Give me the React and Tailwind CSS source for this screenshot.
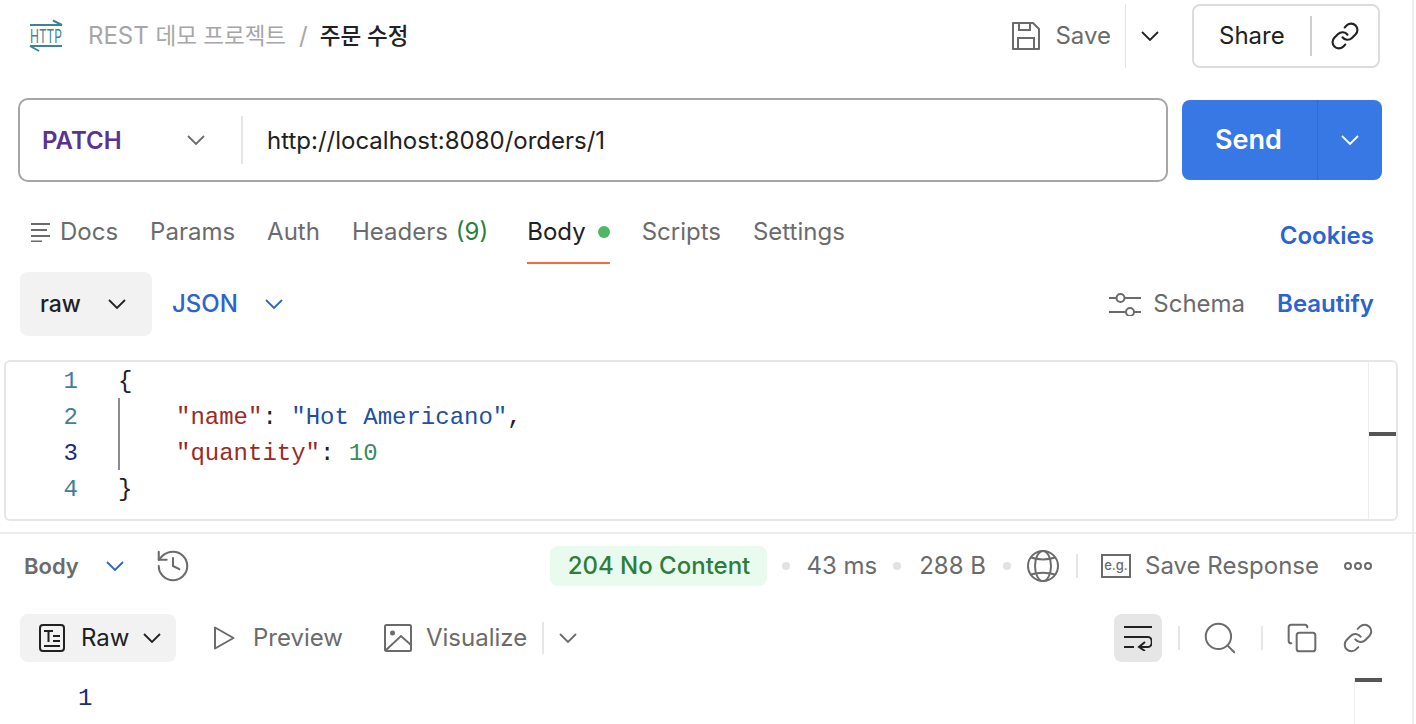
import React from "react";
import { Link, Search, Copy, History } from "lucide-react";

const SANS = "font-['Inter','Noto_Sans_CJK_KR',sans-serif]";

function Chevron({ className = "" }) {
  return (
    <svg width="22" height="22" viewBox="0 0 22 22" fill="none" stroke="currentColor" strokeWidth="1.8" className={`shrink-0 ${className}`}>
      <path d="M3 7l8 8 8-8" />
    </svg>
  );
}

function HttpLogo() {
  return (
    <svg width="36" height="34" viewBox="0 0 36 34" className="shrink-0 overflow-visible">
      <path d="M2 6H34M25 1.500L34 6M2 27H34M2 27L11 32" fill="none" stroke="#3c8494" strokeWidth="2" />
      <text x="2" y="24" textLength="32" lengthAdjust="spacingAndGlyphs" fontFamily="Inter" fontSize="18" fill="#3c8494">
        HTTP
      </text>
    </svg>
  );
}

function SaveIcon() {
  return (
    <svg width="30" height="30" viewBox="0 0 30 30" fill="none" stroke="#6b6b6b" strokeWidth="2">
      <path d="M2 2H22L28 8V28H2Z" strokeLinejoin="round" />
      <path d="M8 2V9H19V2M7 28V17H23V28" />
    </svg>
  );
}

function DocsIcon() {
  return (
    <svg width="20" height="20" viewBox="0 0 20 20" stroke="#6b6b6b" strokeWidth="2">
      <path d="M1 2H20M1 8H17M1 14H20M1 19.500H12" />
    </svg>
  );
}

function SlidersIcon() {
  return (
    <svg width="32" height="24" viewBox="0 0 32 24" fill="none" stroke="#6b6b6b" strokeWidth="2">
      <path d="M0 6H7M16 6H32M0 20H16M25 20H32" />
      <circle cx="11.500" cy="6" r="4" />
      <circle cx="21" cy="20" r="4" />
    </svg>
  );
}

function GlobeIcon() {
  return (
    <svg width="32" height="32" viewBox="0 0 32 32" fill="none" stroke="#6b6b6b" strokeWidth="2" className="shrink-0">
      <circle cx="16" cy="16" r="15" />
      <ellipse cx="16" cy="16" rx="8" ry="15" />
      <path d="M4 7.500C11 10 21 10 28 7.500M4 24.500C11 22 21 22 28 24.500" />
    </svg>
  );
}

function RawIcon() {
  return (
    <svg width="28" height="28" viewBox="0 0 28 28" fill="none" stroke="#212121" strokeWidth="2" className="shrink-0">
      <rect x="2" y="1" width="24" height="26" rx="3" />
      <path d="M6 7H15M10.500 7V18M15 12H22M15 17H22M6 22H22" />
    </svg>
  );
}

function WrapIcon() {
  return (
    <svg width="28" height="26" viewBox="0 0 28 26" fill="none" stroke="#212121" strokeWidth="2">
      <path d="M0 2H28M0 12H24C29 12 29 22 24 22H16M21 17l-6 5 6 4M0 22H10" />
    </svg>
  );
}

function PlayIcon() {
  return (
    <svg width="21" height="24" viewBox="0 0 21 24" fill="none" stroke="#6b6b6b" strokeWidth="2" className="shrink-0">
      <path d="M1 1.500V22.500L19.500 12Z" strokeLinejoin="round" />
    </svg>
  );
}

function ImageIcon() {
  return (
    <svg width="28" height="28" viewBox="0 0 28 28" fill="none" stroke="#6b6b6b" strokeWidth="2" className="shrink-0">
      <rect x="1" y="1" width="26" height="26" rx="1.500" />
      <circle cx="8.500" cy="9" r="2.500" fill="#6b6b6b" stroke="none" />
      <path d="M2 26L17 12L27 21" />
    </svg>
  );
}

function Dot() {
  return <span className="block w-2 h-2 rounded-full bg-[#e2e2e2] shrink-0" />;
}

function RequestTab({ active, children }) {
  return (
    <div className={`h-[64px] pt-[16px] flex items-start border-b-2 ${active ? "border-[#f26b3a] text-[#212121]" : "border-transparent text-[#6b6b6b]"}`}>
      {children}
    </div>
  );
}

export default function App() {
  return (
    <div className={`${SANS} relative w-[1416px] h-[724px] overflow-hidden bg-white text-[24px] leading-[32px]`}>
      <div className="absolute top-0 bottom-0 left-[1412px] w-[2px] bg-[#ececec]" />

      {/* header */}
      <div className="h-[72px] pl-[28px] pr-[36px] flex items-center justify-between">
        <div className="flex items-center">
          <HttpLogo />
          <span className="ml-[24px] text-[#a6a6a6]">
            REST <span className="text-[22.5px]">데모 프로젝트</span>
          </span>
          <span className="ml-[13px] text-[#a6a6a6]">/</span>
          <span className="ml-[12px] text-[22.5px] font-medium text-[#212121]">주문 수정</span>
        </div>
        <div className="flex items-center">
          <SaveIcon />
          <span className="ml-[14px] text-[#6b6b6b]">Save</span>
          <span className="ml-[14px] w-[1px] h-[64px] bg-[#e6e6e6]" />
          <Chevron className="ml-[13px] text-[#212121]" />
          <div className="ml-[31px] w-[188px] h-[64px] rounded-lg border-2 border-[#dcdcdc] flex items-center">
            <span className="ml-[25px] text-[#212121]">Share</span>
            <span className="ml-[25px] w-[2px] h-[40px] bg-[#cfcfcf]" />
            <Link size={30} strokeWidth={1.7} className="ml-[18px] text-[#212121]" />
          </div>
        </div>
      </div>

      {/* url bar */}
      <div className="mt-[26px] pl-[18px] pr-[34px] flex items-center gap-[14px]">
        <div className="flex-1 h-[84px] rounded-[10px] border-2 border-[#a6a6a6] flex items-center">
          <span className="ml-[22px] pt-[2px] w-[143px] font-semibold text-[#5a3295]">PATCH</span>
          <Chevron className="text-[#6b6b6b]" />
          <span className="ml-[34px] w-[2px] h-[48px] bg-[#e6e6e6]" />
          <span className="ml-[24px] pt-[2px] text-[#212121]">http://localhost:8080/orders/1</span>
        </div>
        <div className="w-[200px] h-[80px] rounded-lg bg-[#3878e4] flex items-center text-white">
          <span className="w-[133px] text-center text-[27px] font-semibold">Send</span>
          <span className="ml-[2px] w-[1px] h-[80px] bg-[#2f6cd4]" />
          <Chevron className="ml-[21px]" />
        </div>
      </div>

      {/* request tabs */}
      <div className="mt-[18px] h-[64px] pl-[30px] pr-[42px] flex items-start justify-between">
        <div className="flex items-start">
          <RequestTab>
            <span className="mt-[6px] mr-[10px]"><DocsIcon /></span>
            <span>Docs</span>
          </RequestTab>
          <div className="ml-[32px]"><RequestTab>Params</RequestTab></div>
          <div className="ml-[32px]"><RequestTab>Auth</RequestTab></div>
          <div className="ml-[32px]">
            <RequestTab>
              Headers<span className="ml-[8px] text-[#2f7d3b]">(9)</span>
            </RequestTab>
          </div>
          <div className="ml-[39px]">
            <RequestTab active>
              Body<span className="ml-[12px] mt-[10px] w-[12px] h-[12px] rounded-full bg-[#4fb862]" />
            </RequestTab>
          </div>
          <div className="ml-[32px]"><RequestTab>Scripts</RequestTab></div>
          <div className="ml-[32px]"><RequestTab>Settings</RequestTab></div>
        </div>
        <span className="mt-[20px] font-semibold text-[#2b64cf]">Cookies</span>
      </div>

      {/* body options */}
      <div className="mt-[8px] h-[64px] pl-[20px] pr-[42px] flex items-center justify-between">
        <div className="flex items-center">
          <div className="w-[132px] h-[64px] rounded-lg bg-[#f2f2f2] flex items-center pl-[20px]">
            <span className="text-[23px] font-medium text-[#212121]">raw</span>
            <Chevron className="ml-[25px] text-[#212121]" />
          </div>
          <span className="ml-[20px] font-medium text-[#2b64cf]">JSON</span>
          <Chevron className="ml-[25px] text-[#2b64cf]" />
        </div>
        <div className="flex items-center">
          <SlidersIcon />
          <span className="ml-[12px] text-[#6b6b6b]">Schema</span>
          <span className="ml-[32px] font-semibold text-[#2b64cf]">Beautify</span>
        </div>
      </div>

      {/* editor */}
      <div className="relative mt-[24px] ml-[4px] w-[1394px] h-[161px] rounded-md border-2 border-[#e6e6e6] font-['Liberation_Mono',monospace] text-[24px]">
        <div className="flex">
          <div className="w-[72px] text-right text-[#3f7f99]">
            <div className="h-[36px] leading-[40px]">1</div>
            <div className="h-[36px] leading-[40px]">2</div>
            <div className="h-[36px] leading-[40px] text-[#1c2a80]">3</div>
            <div className="h-[36px] leading-[40px]">4</div>
          </div>
          <div className="ml-[40px] text-[#212121]">
            <div className="h-[36px] leading-[40px]">{"{"}</div>
            <div className="border-l-2 border-[#8c8c8c] pl-[56px]">
              <div className="h-[36px] leading-[40px]">
                <span className="text-[#9a2a26]">"name"</span>: <span className="text-[#1f4f9e]">"Hot Americano"</span>,
              </div>
              <div className="h-[36px] leading-[40px]">
                <span className="text-[#9a2a26]">"quantity"</span>: <span className="text-[#3b8a5e]">10</span>
              </div>
            </div>
            <div className="h-[36px] leading-[40px]">{"}"}</div>
          </div>
        </div>
        <div className="absolute top-0 bottom-0 right-0 w-[28px] border-l border-[#eeeeee]">
          <div className="absolute top-[70px] left-0 right-0 h-[4px] bg-[#555555]" />
        </div>
      </div>

      <div className="mt-[11px] h-[2px] bg-[#ececec]" />

      {/* response bar */}
      <div className="mt-[12px] h-[40px] pl-[24px] pr-[44px] flex items-center justify-between">
        <div className="flex items-center">
          <span className="font-semibold text-[22px] text-[#6b6b6b]">Body</span>
          <Chevron className="ml-[25px] text-[#2b64cf]" />
          <History size={38} strokeWidth={1.3} className="ml-[28px] text-[#6b6b6b]" />
        </div>
        <div className="flex items-center text-[#6b6b6b]">
          <span className="w-[217px] h-[40px] rounded-lg bg-[#e9fbef] text-center leading-[40px] font-medium text-[#2f7d3b]">204 No Content</span>
          <span className="ml-[15px]"><Dot /></span>
          <span className="ml-[16px]">43 ms</span>
          <span className="ml-[16px]"><Dot /></span>
          <span className="ml-[18px]">288 B</span>
          <span className="ml-[17px]"><Dot /></span>
          <span className="ml-[16px]"><GlobeIcon /></span>
          <span className="ml-[17px] w-[2px] h-[24px] bg-[#e6e6e6]" />
          <span className="ml-[23px] w-[30px] h-[24px] border-2 border-[#6b6b6b] text-[13px] leading-[18px] text-center font-medium">e.g.</span>
          <span className="ml-[14px]">Save Response</span>
          <span className="ml-[25px] flex gap-[2px]">
            <span className="w-[8px] h-[8px] rounded-full border-2 border-[#6b6b6b]" />
            <span className="w-[8px] h-[8px] rounded-full border-2 border-[#6b6b6b]" />
            <span className="w-[8px] h-[8px] rounded-full border-2 border-[#6b6b6b]" />
          </span>
        </div>
      </div>

      {/* response view row */}
      <div className="mt-[28px] h-[48px] pl-[20px] pr-[42px] flex items-center justify-between">
        <div className="flex items-center text-[#6b6b6b]">
          <div className="w-[156px] h-[48px] rounded-lg bg-[#f2f2f2] flex items-center pl-[18px] text-[#212121]">
            <RawIcon />
            <span className="ml-[15px]">Raw</span>
            <Chevron className="ml-[12px]" />
          </div>
          <span className="ml-[38px]"><PlayIcon /></span>
          <span className="ml-[18px]">Preview</span>
          <span className="ml-[41px]"><ImageIcon /></span>
          <span className="ml-[14px]">Visualize</span>
          <span className="ml-[15px] w-[2px] h-[32px] bg-[#e6e6e6]" />
          <Chevron className="ml-[13px]" />
        </div>
        <div className="flex items-center text-[#6b6b6b]">
          <div className="w-[48px] h-[48px] rounded-lg bg-[#e6e6e6] flex items-center justify-center">
            <WrapIcon />
          </div>
          <span className="ml-[16px] w-[2px] h-[24px] bg-[#e6e6e6]" />
          <Search size={38} strokeWidth={1.25} className="ml-[21px]" />
          <span className="ml-[22px] w-[2px] h-[24px] bg-[#e6e6e6]" />
          <Copy size={32} strokeWidth={1.5} className="ml-[23px]" />
          <Link size={32} strokeWidth={1.5} className="ml-[24px]" />
        </div>
      </div>

      {/* response body */}
      <div className="relative mt-[19px] pl-[78px] font-['Liberation_Mono',monospace] leading-[36px] text-[#1c2a80]">
        1
      </div>
      <div className="absolute left-[1354px] top-[678px] bottom-0 w-[28px] border-l border-[#eeeeee]">
        <div className="h-[4px] bg-[#555555]" />
      </div>
    </div>
  );
}
